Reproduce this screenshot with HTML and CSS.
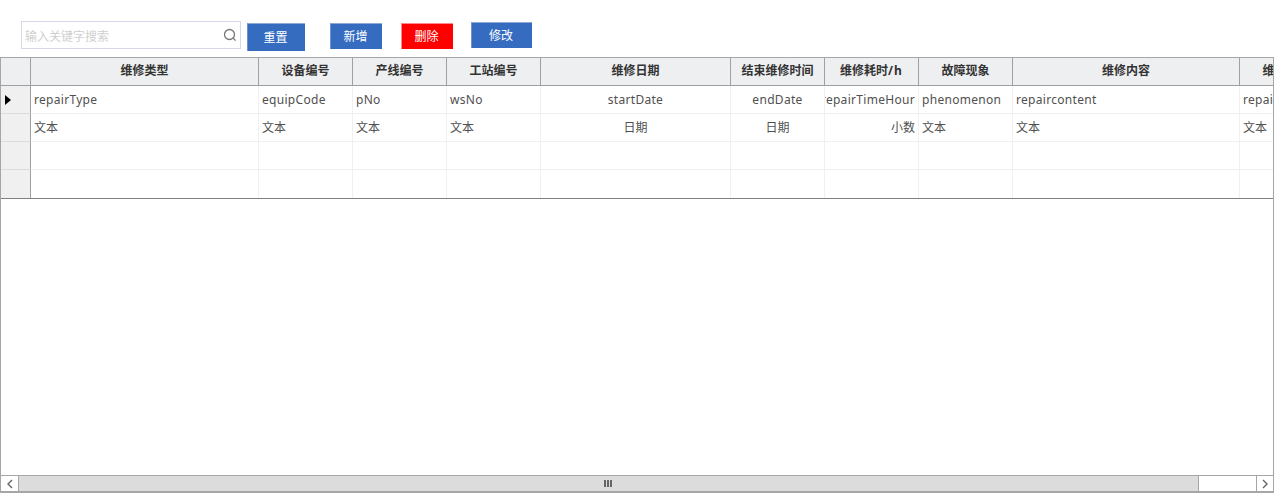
FILE: index.html
```html
<!DOCTYPE html>
<html lang="zh">
<head>
<meta charset="utf-8">
<title>维修记录</title>
<link rel="stylesheet" href="styles.css">
</head>
<body>
<div class="toolbar">
  <div class="search">
    <span class="placeholder">输入关键字搜索</span>
    <svg class="search-icon" width="14" height="14" viewBox="0 0 14 14"><circle cx="6.5" cy="6.5" r="5" fill="none" stroke="#777" stroke-width="1.3"/><path d="M10.3 10.3 12.6 12.6" stroke="#777" stroke-width="1.3" fill="none"/></svg>
  </div>
  <button class="btn btn-reset">重置</button>
  <button class="btn btn-add">新增</button>
  <button class="btn btn-del">删除</button>
  <button class="btn btn-edit">修改</button>
</div>
<div class="grid-frame">
  <div class="grid-body">
    <div class="row head">
      <div class="rh"></div>
      <div>维修类型</div><div>设备编号</div><div>产线编号</div><div>工站编号</div><div>维修日期</div><div>结束维修时间</div><div>维修耗时<span class="unit">/h</span></div><div>故障现象</div><div>维修内容</div><div class="last">维修人员</div>
    </div>
    <div class="row en">
      <div class="rh"><svg width="6" height="10" viewBox="0 0 6 10"><path d="M0 0 6 5 0 10Z" fill="#000"/></svg></div>
      <div>repairType</div><div>equipCode</div><div>pNo</div><div>wsNo</div><div class="c">startDate</div><div class="c">endDate</div><div class="clip">repairTimeHour</div><div>phenomenon</div><div>repaircontent</div><div>repairman</div>
    </div>
    <div class="row">
      <div class="rh"></div>
      <div>文本</div><div>文本</div><div>文本</div><div>文本</div><div class="c">日期</div><div class="c">日期</div><div class="r">小数</div><div>文本</div><div>文本</div><div>文本</div>
    </div>
    <div class="row">
      <div class="rh"></div><div></div><div></div><div></div><div></div><div></div><div></div><div></div><div></div><div></div><div></div>
    </div>
    <div class="row end">
      <div class="rh"></div><div></div><div></div><div></div><div></div><div></div><div></div><div></div><div></div><div></div><div></div>
    </div>
  </div>
  <div class="scrollbar">
    <div class="arrow"><svg width="7" height="10" viewBox="0 0 7 10"><path d="M6 1 2 5 6 9" fill="none" stroke="#666" stroke-width="1.4"/></svg></div>
    <div class="thumb"><span></span><span></span><span></span></div>
    <div class="track"></div>
    <div class="arrow arrow-right"><svg width="7" height="10" viewBox="0 0 7 10"><path d="M1 1 5 5 1 9" fill="none" stroke="#666" stroke-width="1.4"/></svg></div>
  </div>
</div>
</body>
</html>
```

FILE: styles.css
```css
* { box-sizing: border-box; }
html, body { margin: 0; padding: 0; height: 493px; overflow: hidden; background: #fff; }
body { font-family: "Noto Sans", "Noto Sans CJK SC", sans-serif; font-size: 12px; color: #505050; }

.toolbar { display: flex; align-items: flex-start; height: 57px; padding: 21px 0 0 21px; }
.search { width: 220px; height: 28px; border: 1px solid #d8d8ea; display: flex; align-items: center; justify-content: space-between; padding: 1px 3px 0 3px; background: #fff; }
.placeholder { color: #cfcfcf; font-size: 12px; }
.search-icon { display: block; margin-top: -1px; }
.btn { border: 0; border-top: 1px solid #8fa9d6; border-left: 1px solid #6f93cf; padding: 0 2px 1px 0; background: #356cbf; color: #fff; font: inherit; font-size: 12px; display: block; }
.btn-reset { width: 58px; height: 28px; margin: 2px 0 0 6px; }
.btn-add { width: 52px; height: 26px; margin: 2px 0 0 25px; }
.btn-del { width: 52px; height: 26px; margin: 2px 0 0 19px; background: #fe0000; border-top-color: #fb8a8a; border-left-color: #fb8a8a; color: #fff; }
.btn-edit { width: 61px; height: 26px; margin: 1px 0 0 18px; padding-bottom: 2px; }

.grid-frame { height: 436px; border: 1px solid #a6a6a6; border-bottom-width: 2px; display: flex; flex-direction: column; overflow: hidden; width: 1274px; }
.grid-body { flex: 1; overflow: hidden; }
.row { display: grid; grid-template-columns: 30px 228px 94px 94px 94px 190px 94px 94px 94px 227px 94px; width: 1333px; height: 28px; }
.row > div { border-right: 1px solid #f0f0f0; border-bottom: 1px solid #f0f0f0; padding: 0 3px; line-height: 27px; white-space: nowrap; overflow: hidden; }
.row > .rh { background: #f0f0f0; border-right: 1px solid #a0a0a0; border-bottom: 1px solid #dcdcdc; padding: 0 0 0 4px; display: flex; align-items: center; }
.row.en > div { letter-spacing: .3px; }
.row.head > div { background: #eeeff1; border-right: 1px solid #a0a0a0; border-bottom: 1px solid #a0a0a0; color: #333; font-weight: 700; text-align: center; line-height: 26px; }
.unit { letter-spacing: 1px; }
.row.end { height: 29px; border-bottom: 1px solid #808080; }
.row.end > div { border-bottom: 0; height: 28px; }
.row > .c { text-align: center; }
.row > .r { text-align: right; }
.row > .clip { direction: rtl; text-align: left; }

.scrollbar { display: flex; height: 16px; flex: none; border-top: 1px solid #a6a6a6; }
.arrow { width: 18px; display: flex; align-items: center; justify-content: center; background: #fff; border-right: 1px solid #a6a6a6; }
.arrow-right { width: 17px; border-right: 0; border-left: 1px solid #a6a6a6; }
.thumb { width: 1180px; padding-right: 2px; background: #dcdcdc; border-right: 1px solid #a6a6a6; display: flex; align-items: center; justify-content: center; gap: 1px; }
.thumb span { width: 2px; height: 7px; background: #666; }
.track { flex: 1; background: #fff; }
```
